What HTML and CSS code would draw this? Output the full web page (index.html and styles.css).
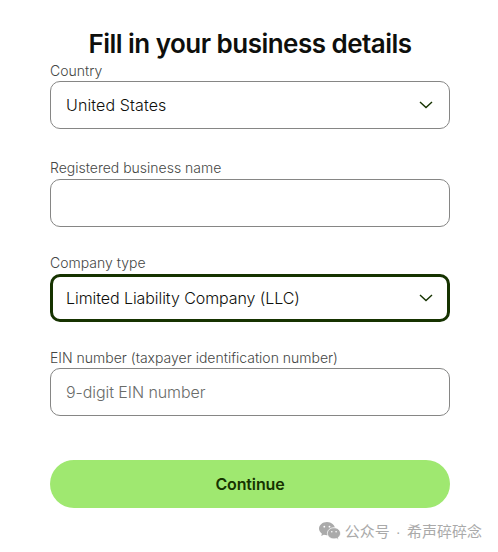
FILE: index.html
```html
<!DOCTYPE html>
<html lang="en">
<head>
    <meta charset="UTF-8">
    <meta name="viewport" content="width=device-width, initial-scale=1.0">
    <title>Business details</title>
    <link rel="stylesheet" href="styles.css">
</head>
<body>
    <form class="business-form">
        <h1>Fill in your business details</h1>

        <div class="field field-country">
            <label for="country">Country</label>
            <button type="button" class="control select" id="country">
                <span>United States</span>
                <svg class="chevron" viewBox="0 0 14 8"><path d="M1 1l6 5.6L13 1"/></svg>
            </button>
        </div>

        <div class="field field-name">
            <label for="business-name">Registered business name</label>
            <input type="text" class="control" id="business-name">
        </div>

        <div class="field field-type">
            <label for="company-type">Company type</label>
            <button type="button" class="control select active" id="company-type">
                <span>Limited Liability Company (LLC)</span>
                <svg class="chevron" viewBox="0 0 14 8"><path d="M1 1l6 5.6L13 1"/></svg>
            </button>
        </div>

        <div class="field field-ein">
            <label for="ein">EIN number (taxpayer identification number)</label>
            <input type="text" class="control" id="ein" placeholder="9-digit EIN number">
        </div>

        <button type="button" class="continue">Continue</button>
    </form>

    <footer class="account">
        <svg class="wechat" viewBox="0 0 22 18">
            <path class="bubble" d="M8 0C3.6 0 0 2.9 0 6.6c0 2 1.100 3.900 2.900 5.100L2.200 14l2.600-1.300c1 .3 2.100.5 3.200.5 4.400 0 8-3 8-6.600S12.400 0 8 0z"/>
            <path class="bubble front" d="M15 5.700c-3.700 0-6.600 2.500-6.600 5.600s2.900 5.600 6.600 5.600c.8 0 1.700-.1 2.400-.4l2.200 1.200-.6-1.900c1.600-1.100 2.500-2.700 2.500-4.500 0-3.100-2.900-5.600-6.500-5.600z"/>
            <g class="eyes">
                <circle cx="5.300" cy="4.700" r=".9"/>
                <circle cx="10.500" cy="4.700" r=".9"/>
                <circle cx="12.800" cy="9.700" r=".8"/>
                <circle cx="17.100" cy="9.700" r=".8"/>
            </g>
        </svg>
        <span>公众号 · 希声碎碎念</span>
    </footer>
</body>
</html>
```
FILE: styles.css
```css
:root {
    --text-primary: #0e0f0c;
    --text-label: #454745;
    --text-placeholder: #6a6c6a;
    --border-color: #868685;
    --forest: #163300;
    --bright-green: #9fe870;
}

* {
    box-sizing: border-box;
}

body {
    font-family: 'Inter', sans-serif;
    background: #fff;
    color: var(--text-primary);
    margin: 0;
    padding: 28px 0 0;
}

.business-form {
    width: 400px;
    margin: 0 48px 0 50px;
}

h1 {
    font-size: 26px;
    font-weight: 600;
    line-height: 32px;
    letter-spacing: -0.52px;
    margin: 0;
    text-align: center;
    white-space: nowrap;
}

.field {
    display: flex;
    flex-direction: column;
}

.field-country {
    margin-top: 1px;
}

.field-name {
    margin-top: 29px;
}

.field-type {
    margin-top: 26px;
}

.field-ein {
    margin-top: 26px;
}

label {
    font-size: 14px;
    font-weight: 360;
    line-height: 19px;
    color: var(--text-label);
    margin-bottom: 2px;
}

.field-country label,
.field-ein label {
    margin-bottom: 1px;
}

.control {
    width: 100%;
    height: 48px;
    padding: 0 15px;
    background: #fff;
    border: 1px solid var(--border-color);
    border-radius: 10px;
    color: var(--text-primary);
    font-family: inherit;
    font-size: 16px;
    font-weight: 360;
    letter-spacing: -0.07px;
    outline: none;
}

.control::placeholder {
    color: var(--text-placeholder);
    opacity: 1;
}

.select {
    display: flex;
    align-items: center;
    justify-content: space-between;
    text-align: left;
}

.field-country .select {
    letter-spacing: 0.12px;
}

.select.active {
    border: 3px solid var(--forest);
    padding: 0 13px;
}

.chevron {
    width: 14px;
    height: 8px;
    margin-right: 1px;
    fill: none;
    stroke: var(--forest);
    stroke-width: 1.4;
}

.continue {
    display: block;
    width: 100%;
    height: 48px;
    margin-top: 44px;
    border: none;
    border-radius: 24px;
    background: var(--bright-green);
    color: var(--forest);
    font-family: inherit;
    font-size: 16px;
    font-weight: 600;
    letter-spacing: -0.15px;
}

.account {
    display: flex;
    align-items: center;
    justify-content: flex-end;
    gap: 4px;
    margin: 12px 16px 0 0;
    height: 22px;
    color: #aaa;
    font-family: 'Liberation Sans', 'Noto Sans CJK SC', sans-serif;
    font-size: 15px;
    line-height: 24px;
    word-spacing: 2px;
    white-space: nowrap;
}

.wechat {
    width: 22px;
    height: 18px;
}

.account span {
    padding-top: 2px;
}

.bubble {
    fill: #aaa;
}

.front {
    stroke: #fff;
    stroke-width: 0.8;
}

.eyes {
    fill: #fff;
}
```
